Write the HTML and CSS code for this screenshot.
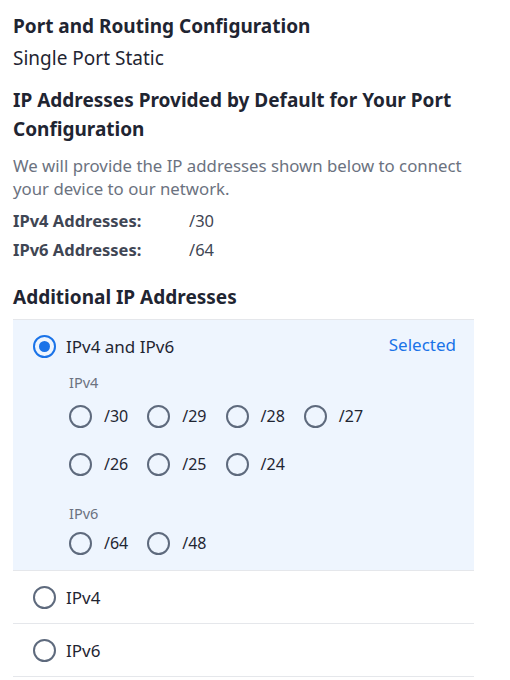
FILE: index.html
```html
<!DOCTYPE html>
<html lang="en">
<head>
<meta charset="utf-8">
<title>Port and Routing Configuration</title>
<link rel="stylesheet" href="styles.css">
</head>
<body>
<main class="page">
  <h2 class="title">Port and Routing Configuration</h2>
  <p class="subtitle">Single Port Static</p>

  <h2 class="heading">IP Addresses Provided by Default for Your Port Configuration</h2>
  <p class="desc">We will provide the IP addresses shown below to connect your device to our network.</p>
  <dl class="defaults">
    <div class="def-row"><dt>IPv4 Addresses:</dt><dd>/30</dd></div>
    <div class="def-row"><dt>IPv6 Addresses:</dt><dd>/64</dd></div>
  </dl>

  <h2 class="section-title">Additional IP Addresses</h2>
  <div class="choices">
    <div class="choice choice-selected">
      <div class="choice-head">
        <span class="radio radio-on"></span>
        <span class="choice-label">IPv4 and IPv6</span>
        <span class="selected-tag">Selected</span>
      </div>
      <div class="sub">
        <div class="sub-label">IPv4</div>
        <div class="opts opts-first">
          <span class="opt"><span class="radio"></span>/30</span>
          <span class="opt"><span class="radio"></span>/29</span>
          <span class="opt"><span class="radio"></span>/28</span>
          <span class="opt"><span class="radio"></span>/27</span>
        </div>
        <div class="opts opts-next">
          <span class="opt"><span class="radio"></span>/26</span>
          <span class="opt"><span class="radio"></span>/25</span>
          <span class="opt"><span class="radio"></span>/24</span>
        </div>
        <div class="sub-label sub-label-2">IPv6</div>
        <div class="opts">
          <span class="opt"><span class="radio"></span>/64</span>
          <span class="opt"><span class="radio"></span>/48</span>
        </div>
      </div>
    </div>
    <div class="choice">
      <div class="choice-head">
        <span class="radio"></span>
        <span class="choice-label">IPv4</span>
      </div>
    </div>
    <div class="choice">
      <div class="choice-head">
        <span class="radio"></span>
        <span class="choice-label">IPv6</span>
      </div>
    </div>
  </div>
</main>
</body>
</html>
```

FILE: styles.css
```css
* { box-sizing: border-box; }

html, body {
  margin: 0;
  padding: 0;
  background: #ffffff;
}

body {
  font-family: "Noto Sans", "Open Sans", sans-serif;
  color: #1f2532;
}

.page {
  width: 474px;
  padding: 12px 0 0 13px;
}

h2, p, dl, dd { margin: 0; }

.title {
  font-size: 19px;
  font-weight: 700;
  line-height: 28px;
}

.subtitle {
  font-size: 19px;
  line-height: 28px;
  margin-top: 4px;
}

.heading {
  font-size: 19px;
  font-weight: 700;
  line-height: 29px;
  margin-top: 14px;
}

.desc {
  font-size: 16.8px;
  line-height: 23px;
  color: #6b7280;
  margin-top: 10px;
}

.defaults {
  margin-top: 6px;
}

.def-row {
  display: flex;
  font-size: 16.5px;
  line-height: 29px;
  color: #3f4654;
}

.def-row dt {
  width: 176px;
  font-weight: 700;
}

.section-title {
  font-size: 19px;
  font-weight: 700;
  line-height: 28px;
  margin-top: 19px;
}

.choices {
  margin-top: 8px;
}

.choice {
  border-top: 1px solid #e5e7eb;
}

.choice:last-child {
  border-bottom: 1px solid #e5e7eb;
}

.choice-selected {
  background: #eef5fe;
  padding-bottom: 7px;
}

.choice-head {
  display: flex;
  align-items: center;
  gap: 10px;
  padding: 0 18px 0 20px;
  height: 52px;
  font-size: 17px;
}

.choice-label {
  flex: 1;
}

.selected-tag {
  color: #1a73e8;
  margin-top: -4px;
}

.radio {
  width: 23px;
  height: 23px;
  border: 2px solid #5e6a7d;
  border-radius: 50%;
  flex: none;
  display: inline-flex;
  align-items: center;
  justify-content: center;
}

.radio-on {
  border-color: #1a73e8;
}

.radio-on::after {
  content: "";
  width: 11px;
  height: 11px;
  border-radius: 50%;
  background: #1a73e8;
}

.sub {
  padding-left: 56px;
}

.sub-label {
  font-size: 14.5px;
  line-height: 20px;
  color: #6b7280;
}

.sub-label-2 {
  margin-top: 19px;
}

.opts {
  display: flex;
  gap: 19px;
  height: 40px;
  align-items: center;
  font-size: 16px;
}

.opts-first {
  margin-top: 4px;
}

.opts-next {
  margin-top: 8px;
}

.opt {
  display: inline-flex;
  align-items: center;
  gap: 12px;
}
```
